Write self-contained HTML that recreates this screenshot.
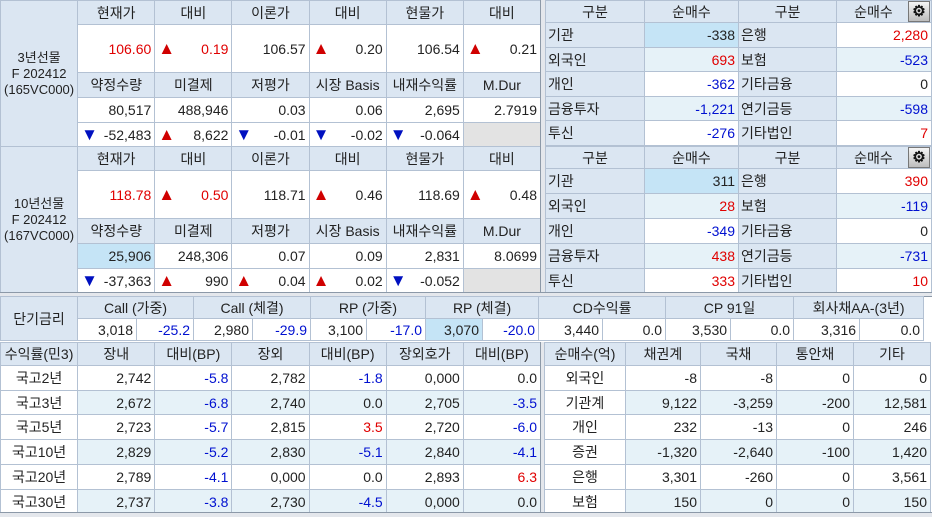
<!DOCTYPE html>
<html><head><meta charset="utf-8"><style>
body{margin:0;width:932px;height:516px;overflow:hidden;background:#fff;font-family:"Liberation Sans","Noto Sans CJK KR","NanumGothic",sans-serif;font-size:14px;color:#222;position:relative}
table{position:absolute;border-collapse:collapse;table-layout:fixed}
td{border:1px solid #b3c1d3;padding:0 3px;white-space:nowrap;overflow:hidden;text-align:right;line-height:14px}
.h{background:#dbe6f2;text-align:center}
.l{background:#dbe6f2;text-align:left;padding-left:2px}
.c{text-align:center}
.a td{background:#e6f2f8}
.a td.l,.a td.h{background:#dbe6f2}
.hi{background:#c5e4f6!important}
.g{background:#e3e3e3}
.r{color:#e00000}.b{color:#0010d0}
.u{float:left;color:#d00000;font-size:17px;line-height:14px}
.d{float:left;color:#0010c0;font-size:17px;line-height:14px}
.sep{position:absolute;background:#e4e7ec;border-left:1px solid #8c99a8;border-right:1px solid #8c99a8}
.gear{position:absolute;left:908px;width:22px;height:21px;background:linear-gradient(#f4f4f4,#bdbdbd);border:1px solid #777;box-sizing:border-box;text-align:center;font-size:15px;line-height:20px;color:#111;font-weight:bold}
.lab{font-size:13px;line-height:16px;padding:0}
</style></head><body>

<table style="left:0;top:0;width:541px">
<col style="width:77px"><col span="6" style="width:77px">
<tr style="height:24px"><td class="h lab" rowspan="5">3년선물<br>F 202412<br>(165VC000)</td><td class="h">현재가</td><td class="h">대비</td><td class="h">이론가</td><td class="h">대비</td><td class="h">현물가</td><td class="h">대비</td></tr>
<tr style="height:48px"><td class="r">106.60</td><td class="r"><span class="u">▲</span>0.19</td><td>106.57</td><td><span class="u">▲</span>0.20</td><td>106.54</td><td><span class="u">▲</span>0.21</td></tr>
<tr style="height:25px"><td class="h">약정수량</td><td class="h">미결제</td><td class="h">저평가</td><td class="h">시장 Basis</td><td class="h">내재수익률</td><td class="h">M.Dur</td></tr>
<tr style="height:25px"><td>80,517</td><td>488,946</td><td>0.03</td><td>0.06</td><td>2,695</td><td>2.7919</td></tr>
<tr style="height:24px"><td><span class="d">▼</span>-52,483</td><td><span class="u">▲</span>8,622</td><td><span class="d">▼</span>-0.01</td><td><span class="d">▼</span>-0.02</td><td><span class="d">▼</span>-0.064</td><td class="g"></td></tr>
</table>

<table style="left:0;top:146px;width:541px">
<col style="width:77px"><col span="6" style="width:77px">
<tr style="height:24px"><td class="h lab" rowspan="5">10년선물<br>F 202412<br>(167VC000)</td><td class="h">현재가</td><td class="h">대비</td><td class="h">이론가</td><td class="h">대비</td><td class="h">현물가</td><td class="h">대비</td></tr>
<tr style="height:48px"><td class="r">118.78</td><td class="r"><span class="u">▲</span>0.50</td><td>118.71</td><td><span class="u">▲</span>0.46</td><td>118.69</td><td><span class="u">▲</span>0.48</td></tr>
<tr style="height:25px"><td class="h">약정수량</td><td class="h">미결제</td><td class="h">저평가</td><td class="h">시장 Basis</td><td class="h">내재수익률</td><td class="h">M.Dur</td></tr>
<tr style="height:25px"><td class="hi">25,906</td><td>248,306</td><td>0.07</td><td>0.09</td><td>2,831</td><td>8.0699</td></tr>
<tr style="height:24px"><td><span class="d">▼</span>-37,363</td><td><span class="u">▲</span>990</td><td><span class="u">▲</span>0.04</td><td><span class="u">▲</span>0.02</td><td><span class="d">▼</span>-0.052</td><td class="g"></td></tr>
</table>

<div class="sep" style="left:540px;top:0;width:4px;height:292px"></div>

<table style="left:545px;top:0;width:386px">
<col style="width:99px"><col style="width:94px"><col style="width:98px"><col style="width:95px">
<tr style="height:22px"><td class="h">구분</td><td class="h">순매수</td><td class="h">구분</td><td class="h" style="padding-right:24px">순매수</td></tr>
<tr style="height:25px"><td class="l">기관</td><td class="hi">-338</td><td class="l">은행</td><td class="r">2,280</td></tr>
<tr class="a" style="height:24px"><td class="l">외국인</td><td class="r">693</td><td class="l">보험</td><td class="b">-523</td></tr>
<tr style="height:25px"><td class="l">개인</td><td class="b">-362</td><td class="l">기타금융</td><td>0</td></tr>
<tr class="a" style="height:24px"><td class="l">금융투자</td><td class="b">-1,221</td><td class="l">연기금등</td><td class="b">-598</td></tr>
<tr style="height:25px"><td class="l">투신</td><td class="b">-276</td><td class="l">기타법인</td><td class="r">7</td></tr>
</table>
<div class="gear" style="top:1px">⚙</div>

<table style="left:545px;top:146px;width:386px">
<col style="width:99px"><col style="width:94px"><col style="width:98px"><col style="width:95px">
<tr style="height:22px"><td class="h">구분</td><td class="h">순매수</td><td class="h">구분</td><td class="h" style="padding-right:24px">순매수</td></tr>
<tr style="height:25px"><td class="l">기관</td><td class="hi">311</td><td class="l">은행</td><td class="r">390</td></tr>
<tr class="a" style="height:25px"><td class="l">외국인</td><td class="r">28</td><td class="l">보험</td><td class="b">-119</td></tr>
<tr style="height:25px"><td class="l">개인</td><td class="b">-349</td><td class="l">기타금융</td><td>0</td></tr>
<tr class="a" style="height:25px"><td class="l">금융투자</td><td class="r">438</td><td class="l">연기금등</td><td class="b">-731</td></tr>
<tr style="height:24px"><td class="l">투신</td><td class="r">333</td><td class="l">기타법인</td><td class="r">10</td></tr>
</table>
<div class="gear" style="top:147px">⚙</div>

<div style="position:absolute;left:0;top:292px;width:932px;height:3px;background:#e4e7ec;border-top:1px solid #8c99a8;border-bottom:1px solid #8c99a8"></div>

<table style="left:0;top:296px;width:923px">
<col style="width:77px">
<col style="width:59px"><col style="width:57px"><col style="width:59px"><col style="width:58px"><col style="width:56px"><col style="width:59px"><col style="width:57px"><col style="width:56px"><col style="width:64px"><col style="width:63px"><col style="width:65px"><col style="width:63px"><col style="width:66px"><col style="width:64px">
<tr style="height:22px"><td class="h" rowspan="2">단기금리</td><td class="h" colspan="2">Call (가중)</td><td class="h" colspan="2">Call (체결)</td><td class="h" colspan="2">RP (가중)</td><td class="h" colspan="2">RP (체결)</td><td class="h" colspan="2">CD수익률</td><td class="h" colspan="2">CP 91일</td><td class="h" colspan="2">회사채AA-(3년)</td></tr>
<tr style="height:22px"><td>3,018</td><td class="b">-25.2</td><td>2,980</td><td class="b">-29.9</td><td>3,100</td><td class="b">-17.0</td><td class="hi">3,070</td><td class="b">-20.0</td><td>3,440</td><td>0.0</td><td>3,530</td><td>0.0</td><td>3,316</td><td>0.0</td></tr>
</table>

<table style="left:0;top:342px;width:541px">
<col style="width:77px"><col span="6" style="width:77px">
<tr style="height:23px"><td class="h" style="padding:0">수익률(민3)</td><td class="h">장내</td><td class="h">대비(BP)</td><td class="h">장외</td><td class="h">대비(BP)</td><td class="h">장외호가</td><td class="h">대비(BP)</td></tr>
<tr style="height:25px"><td class="c">국고2년</td><td>2,742</td><td class="b">-5.8</td><td>2,782</td><td class="b">-1.8</td><td>0,000</td><td>0.0</td></tr>
<tr class="a" style="height:24px"><td class="c" style="background:#fff">국고3년</td><td>2,672</td><td class="b">-6.8</td><td>2,740</td><td>0.0</td><td>2,705</td><td class="b">-3.5</td></tr>
<tr style="height:25px"><td class="c">국고5년</td><td>2,723</td><td class="b">-5.7</td><td>2,815</td><td class="r">3.5</td><td>2,720</td><td class="b">-6.0</td></tr>
<tr class="a" style="height:25px"><td class="c" style="background:#fff">국고10년</td><td>2,829</td><td class="b">-5.2</td><td>2,830</td><td class="b">-5.1</td><td>2,840</td><td class="b">-4.1</td></tr>
<tr style="height:25px"><td class="c">국고20년</td><td>2,789</td><td class="b">-4.1</td><td>0,000</td><td>0.0</td><td>2,893</td><td class="r">6.3</td></tr>
<tr class="a" style="height:24px"><td class="c" style="background:#fff">국고30년</td><td>2,737</td><td class="b">-3.8</td><td>2,730</td><td class="b">-4.5</td><td>0,000</td><td>0.0</td></tr>
</table>

<div class="sep" style="left:540px;top:342px;width:3px;height:170px"></div>

<table style="left:544px;top:342px;width:386px">
<col style="width:81px"><col style="width:75px"><col style="width:76px"><col style="width:77px"><col style="width:77px">
<tr style="height:23px"><td class="h" style="padding:0">순매수(억)</td><td class="h">채권계</td><td class="h">국채</td><td class="h">통안채</td><td class="h">기타</td></tr>
<tr style="height:25px"><td class="c">외국인</td><td>-8</td><td>-8</td><td>0</td><td>0</td></tr>
<tr class="a" style="height:24px"><td class="c" style="background:#fff">기관계</td><td>9,122</td><td>-3,259</td><td>-200</td><td>12,581</td></tr>
<tr style="height:25px"><td class="c">개인</td><td>232</td><td>-13</td><td>0</td><td>246</td></tr>
<tr class="a" style="height:25px"><td class="c" style="background:#fff">증권</td><td>-1,320</td><td>-2,640</td><td>-100</td><td>1,420</td></tr>
<tr style="height:25px"><td class="c">은행</td><td>3,301</td><td>-260</td><td>0</td><td>3,561</td></tr>
<tr class="a" style="height:24px"><td class="c" style="background:#fff">보험</td><td>150</td><td>0</td><td>0</td><td>150</td></tr>
</table>
<div style="position:absolute;left:0;top:512px;width:932px;height:4px;background:#e4e7ec;border-top:1px solid #8c99a8"></div>
</body></html>
